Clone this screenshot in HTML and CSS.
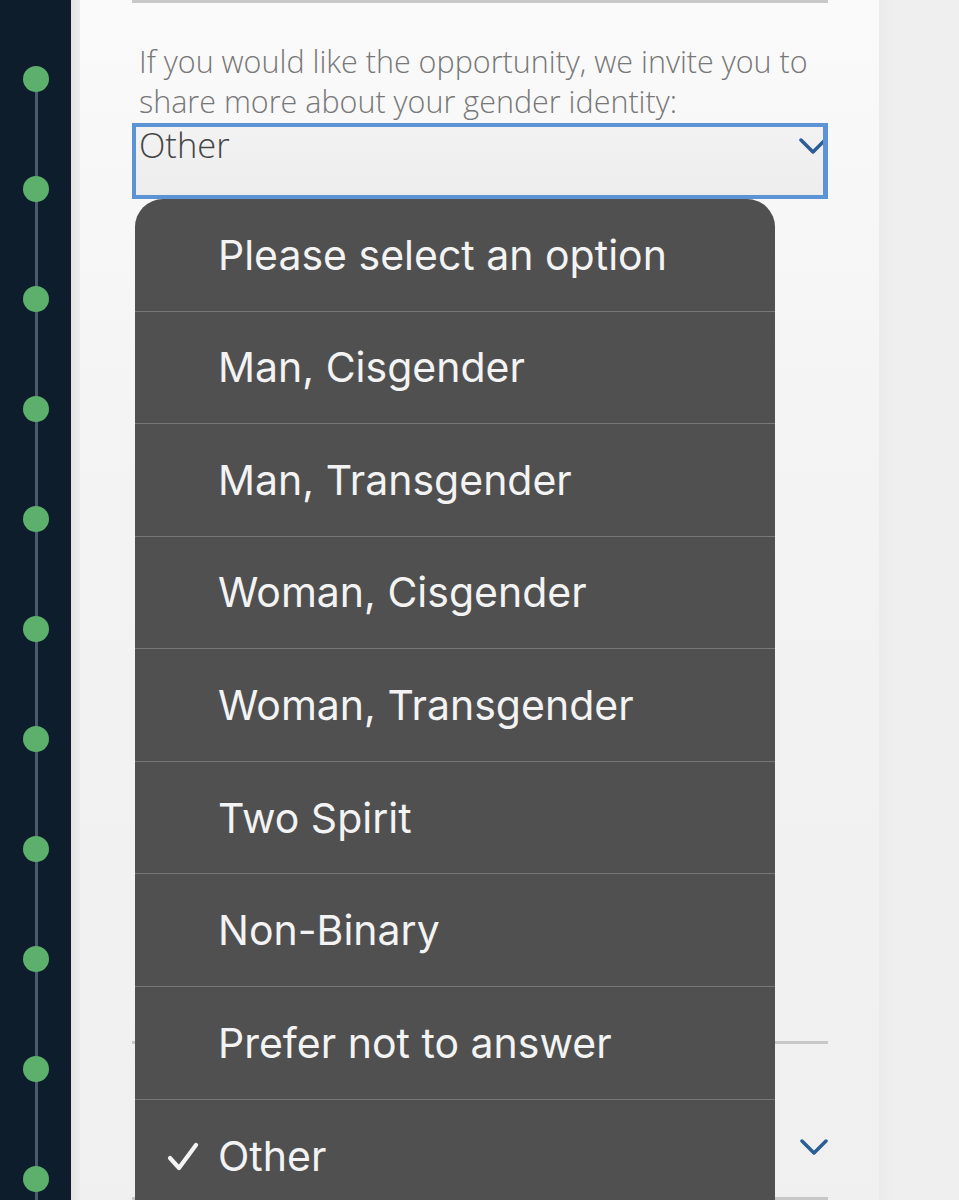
FILE: index.html
```html
<!DOCTYPE html>
<html lang="en">
<head>
<meta charset="utf-8">
<title>Gender identity</title>
<link rel="stylesheet" href="styles.css">
</head>
<body>
<div class="page">
  <aside class="sidebar">
    <div class="timeline">
      <span class="dot"></span><span class="dot"></span><span class="dot"></span><span class="dot"></span>
      <span class="dot"></span><span class="dot"></span><span class="dot"></span><span class="dot"></span>
      <span class="dot"></span><span class="dot"></span><span class="dot"></span>
    </div>
  </aside>
  <div class="gutter"></div>
  <main class="card">
    <div class="rule"></div>
    <p class="label">If you would like the opportunity, we invite you to share more about your gender identity:</p>
    <div class="select">
      <span class="value">Other</span>
      <span class="chev-clip"><svg class="chev" viewBox="0 0 28 17" width="28" height="17"><polyline points="2,2 14,14 26,2" fill="none" stroke="#2c5e96" stroke-width="3.5" stroke-linecap="round" stroke-linejoin="round"/></svg></span>
    </div>
    <div class="field2">
      <div class="rule"></div>
      <div class="field2-body">
        <svg class="chev" viewBox="0 0 28 17" width="28" height="17"><polyline points="2,2 14,14 26,2" fill="none" stroke="#2c5e96" stroke-width="3.5" stroke-linecap="round" stroke-linejoin="round"/></svg>
      </div>
      <div class="rule"></div>
    </div>

    <ul class="menu">
      <li class="opt">Please select an option</li>
      <li class="opt">Man, Cisgender</li>
      <li class="opt">Man, Transgender</li>
      <li class="opt">Woman, Cisgender</li>
      <li class="opt">Woman, Transgender</li>
      <li class="opt">Two Spirit</li>
      <li class="opt">Non-Binary</li>
      <li class="opt">Prefer not to answer</li>
      <li class="opt selected"><svg class="check" viewBox="0 0 32 30" width="32" height="30"><polyline points="3,16 12,26 29,3" fill="none" stroke="#f4f4f4" stroke-width="4.2" stroke-linecap="round" stroke-linejoin="round"/></svg>Other</li>
    </ul>
  </main>
  <div class="aside-bg"></div>
</div>
</body>
</html>
```

FILE: styles.css
```css
html, body {
  margin: 0;
  padding: 0;
  height: 1200px;
  overflow: hidden;
}
body {
  background: #efefef;
}
.page {
  display: flex;
  height: 1200px;
}
.sidebar {
  width: 71px;
  flex: none;
  background: #0e1d2b;
  display: flex;
  justify-content: center;
}
.timeline {
  margin-top: 66px;
  margin-left: 1px;
  width: 26px;
  display: flex;
  flex-direction: column;
  gap: 84px;
  background: linear-gradient(#4c5b6b, #4c5b6b) no-repeat center bottom / 3px calc(100% - 13px);
}
.dot {
  display: block;
  width: 26px;
  height: 26px;
  border-radius: 50%;
  background: #5cb06c;
  flex: none;
}
.gutter {
  width: 9px;
  flex: none;
  background: linear-gradient(90deg, #e3e3e3, #ececec);
}
.card {
  position: relative;
  width: 696px;
  flex: none;
  padding: 0 51px 0 52px;
  background: linear-gradient(180deg, #fafafa 0%, #f3f3f3 40%, #f0f0f0 100%);
}
.aside-bg {
  flex: 1;
  background: linear-gradient(90deg, #ebebeb, #efefef 20%, #efefef);
}
.rule {
  height: 3px;
  background: #c8c8c8;
}
.label {
  margin: 38px 0 0;
  padding-left: 7px;
  font-family: "Open Sans", sans-serif;
  font-weight: 300;
  font-size: 30.5px;
  line-height: 40px;
  color: #777;
}
.select {
  margin-top: 2px;
  height: 68px;
  border: 4px solid #5b93d4;
  border-right-width: 5px;
  background: linear-gradient(180deg, #f2f2f2, #ededed);
  position: relative;
  padding-left: 3px;
}
.value {
  display: block;
  font-family: "Open Sans", sans-serif;
  font-weight: 300;
  font-size: 34.5px;
  line-height: 36px;
  color: #444;
}
.chev {
  display: block;
}
.chev-clip {
  position: absolute;
  right: 0;
  top: 11px;
  width: 24px;
  height: 17px;
  overflow: hidden;
}
.field2 {
  margin-top: 842px;
}
.field2-body {
  height: 153px;
  display: flex;
  justify-content: flex-end;
  padding-top: 95px;
  box-sizing: border-box;
}
.menu {
  position: absolute;
  left: 55px;
  top: 199px;
  width: 640px;
  margin: 0;
  padding: 0;
  list-style: none;
  background: #505050;
  border-radius: 28px;
  overflow: hidden;
  z-index: 2;
}
.opt {
  height: 112.57px;
  box-sizing: border-box;
  border-bottom: 1px solid #777;
  display: flex;
  align-items: center;
  padding-left: 83px;
  position: relative;
  font-family: Inter, "Liberation Sans", sans-serif;
  font-size: 41px;
  letter-spacing: 0;
  color: #f3f3f3;
}
.opt:last-child {
  border-bottom: none;
  height: 140px;
  align-items: flex-start;
  padding-top: 31px;
}
.check {
  position: absolute;
  left: 32px;
  top: 42px;
}
```
